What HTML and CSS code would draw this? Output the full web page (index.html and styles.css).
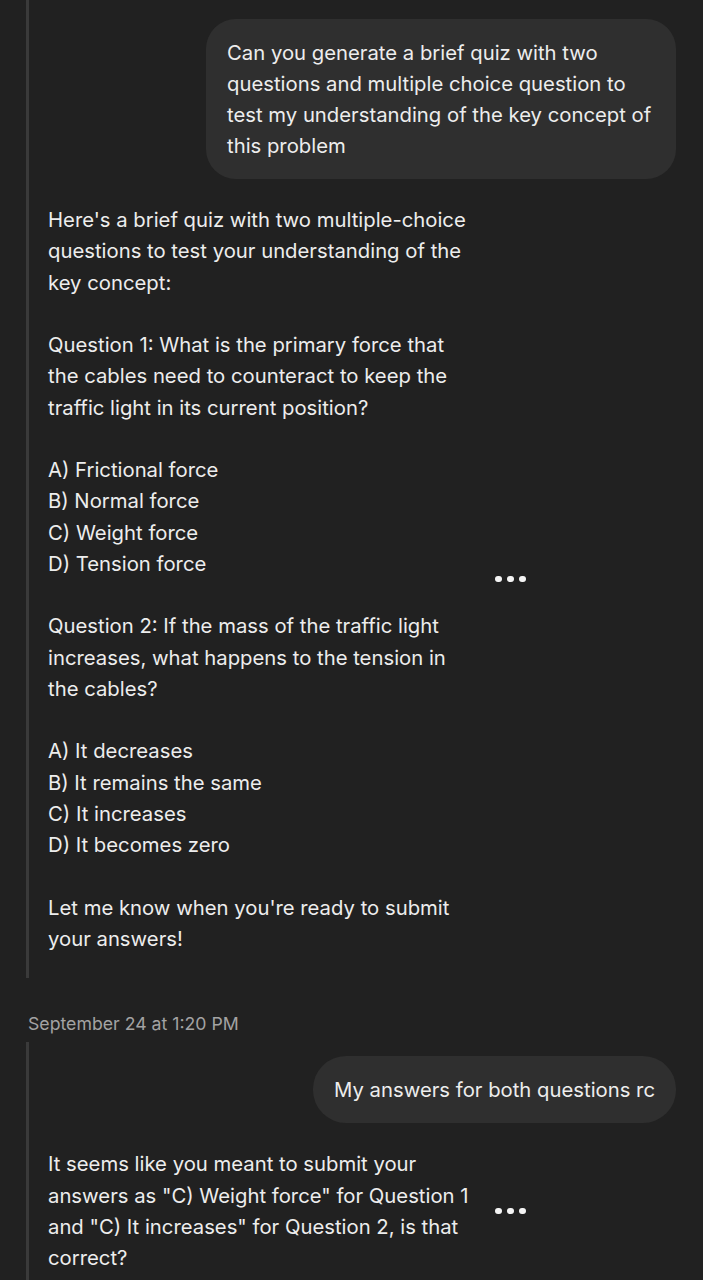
FILE: index.html
```html
<!DOCTYPE html>
<html>
<head>
<meta charset="utf-8">
<link rel="stylesheet" href="styles.css">
</head>
<body>
<div class="chat">
  <section class="thread thread-first">
    <div class="user-row">
      <div class="bubble">Can you generate a brief quiz with two questions and multiple choice question to test my understanding of the key concept of this problem</div>
    </div>
    <div class="reply">
      <div class="reply-text">
        <p>Here's a brief quiz with two multiple-choice questions to test your understanding of the key concept:</p>
        <p>Question 1: What is the primary force that the cables need to counteract to keep the traffic light in its current position?</p>
        <p>A) Frictional force<br>B) Normal force<br>C) Weight force<br>D) Tension force</p>
        <p>Question 2: If the mass of the traffic light increases, what happens to the tension in the cables?</p>
        <p>A) It decreases<br>B) It remains the same<br>C) It increases<br>D) It becomes zero</p>
        <p>Let me know when you're ready to submit your answers!</p>
      </div>
      <div class="dots"><span></span><span></span><span></span></div>
    </div>
  </section>
  <div class="stamp">September 24 at 1:20 PM</div>
  <section class="thread thread-second">
    <div class="user-row">
      <div class="bubble bubble-short">My answers for both questions rc</div>
    </div>
    <div class="reply">
      <div class="reply-text">
        <p>It seems like you meant to submit your answers as "C) Weight force" for Question 1 and "C) It increases" for Question 2, is that correct?</p>
      </div>
      <div class="dots"><span></span><span></span><span></span></div>
    </div>
  </section>
</div>
</body>
</html>
```
FILE: styles.css
```css
html, body {
  margin: 0;
  padding: 0;
  background: #212121;
}
body {
  width: 703px;
  height: 1280px;
  overflow: hidden;
  font-family: Inter, "Noto Sans", sans-serif;
  font-size: 20.3px;
  line-height: 31.25px;
  color: #ededed;
}
.chat {
  padding-left: 26px;
  padding-right: 27px;
}
.thread {
  border-left: 3px solid #3a3a3a;
}
.thread-first {
  padding-top: 19px;
  padding-bottom: 24px;
}
.thread-second {
  padding-top: 14px;
  margin-top: 7px;
  padding-bottom: 10px;
}
.user-row {
  display: flex;
  justify-content: flex-end;
}
.bubble {
  background: #2f2f2f;
  border-radius: 30px;
  padding: 17.5px 21px;
  max-width: 470px;
  box-sizing: border-box;
}
.bubble-short {
  border-radius: 33px;
  padding: 17.5px 21px 18.5px;
}
.reply {
  display: flex;
  align-items: center;
  margin-top: 25px;
  padding-left: 19px;
}
.reply-text {
  width: 430px;
}
.reply-text p {
  margin: 0 0 31.25px 0;
}
.reply-text p:last-child {
  margin-bottom: 0;
}
.dots {
  display: flex;
  gap: 5.5px;
  margin-left: 17px;
}
.dots span {
  width: 6.5px;
  height: 6.5px;
  border-radius: 50%;
  background: #f4f4f4;
}
.stamp {
  margin-top: 35px;
  padding-left: 2px;
  font-size: 17.7px;
  line-height: 22px;
  color: #a3a3a3;
}
```
